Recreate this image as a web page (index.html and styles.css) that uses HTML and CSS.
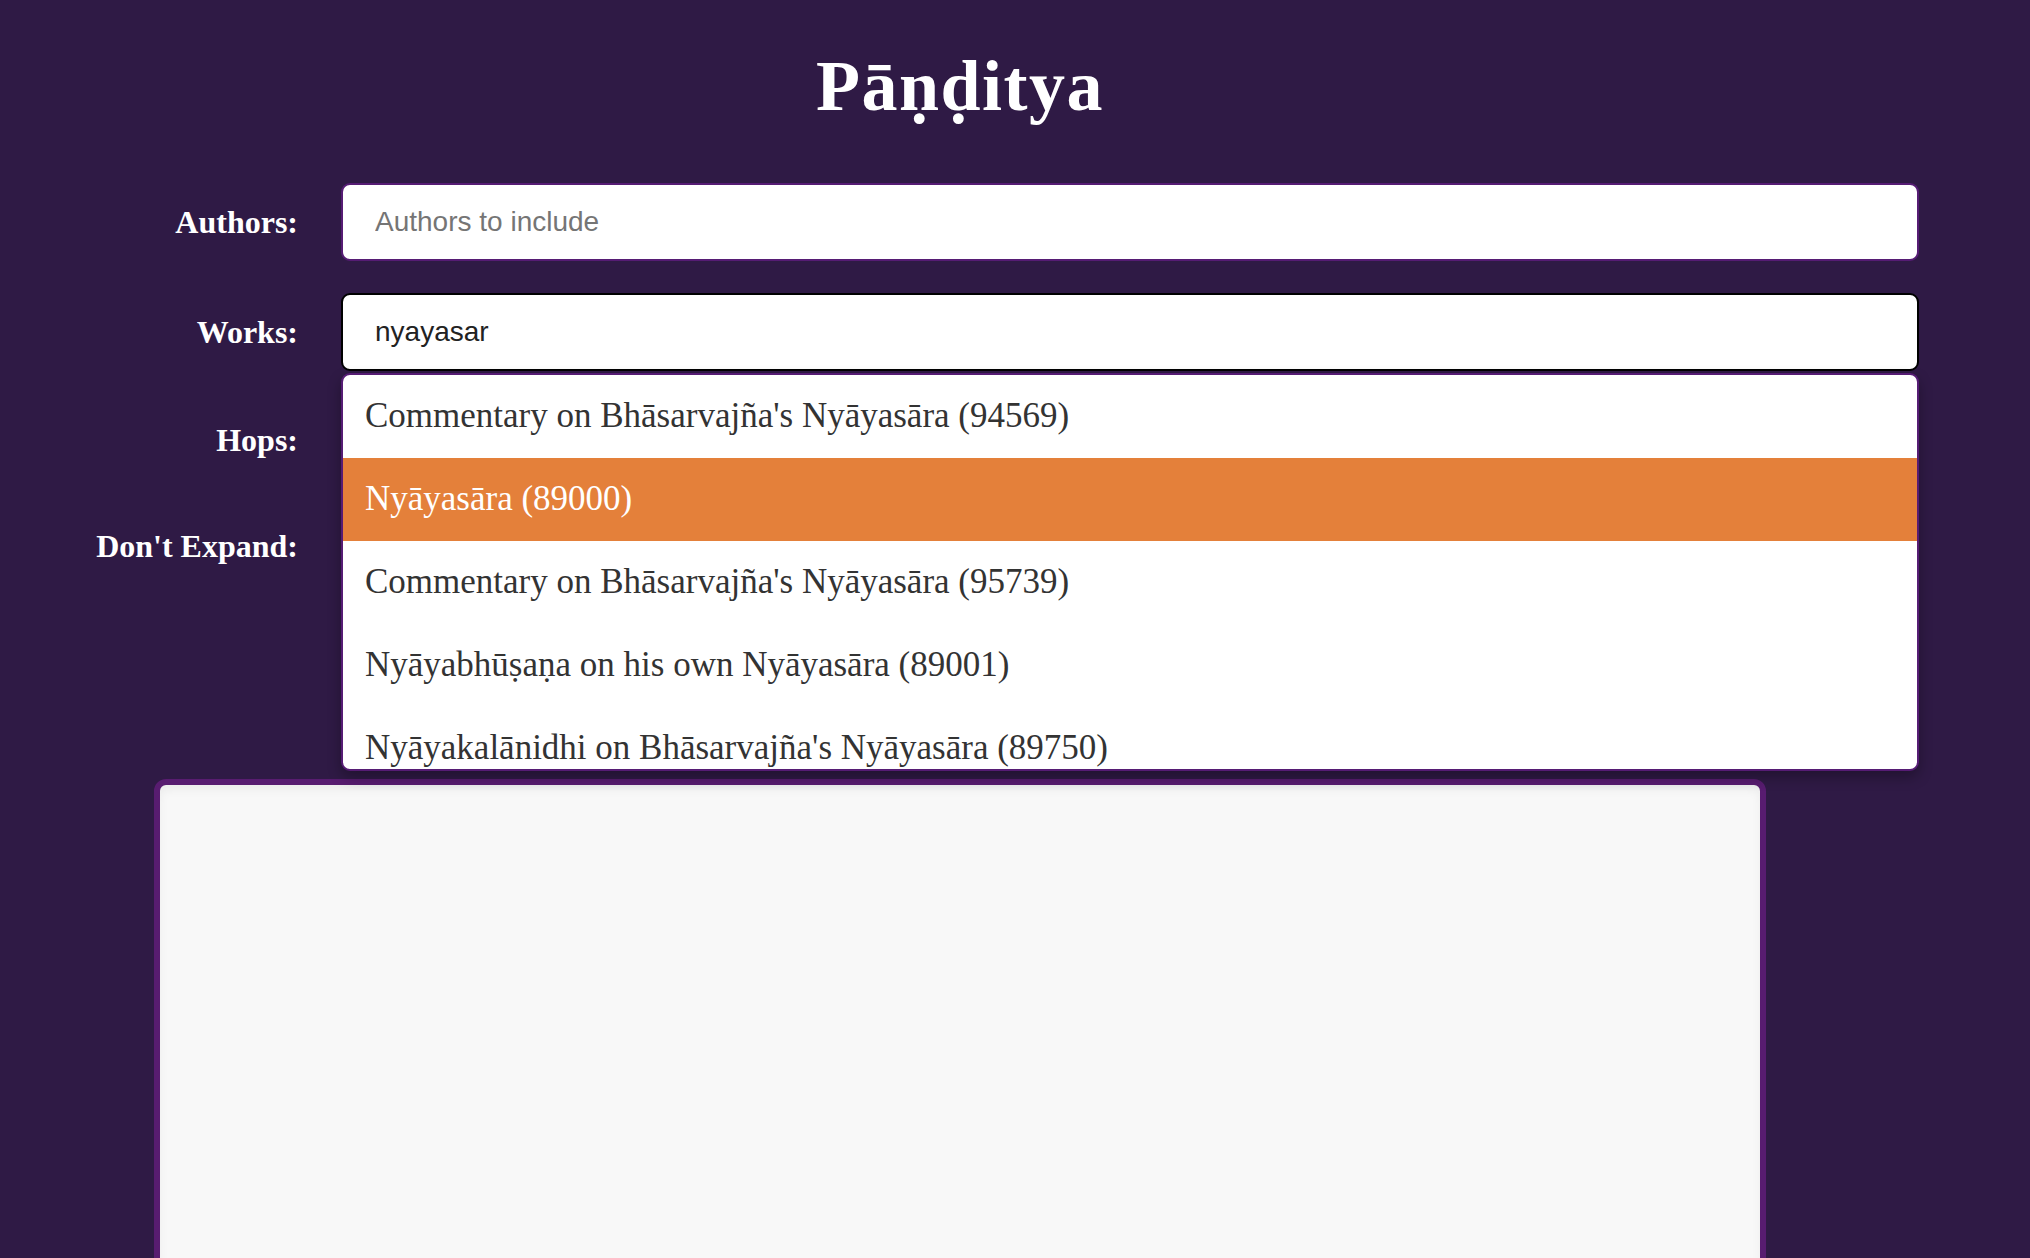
FILE: index.html
```html
<!DOCTYPE html>
<html lang="en">
<head>
<meta charset="utf-8">
<title>Pāṇḍitya</title>
<link rel="stylesheet" href="styles.css">
</head>
<body>
<div class="page">
  <h1 class="title">Pāṇḍitya</h1>
  <form class="form">
    <label class="label" for="authors">Authors:</label>
    <div class="field">
      <input id="authors" class="input" type="text" placeholder="Authors to include">
    </div>

    <label class="label" for="works">Works:</label>
    <div class="field">
      <input id="works" class="input input-focused" type="text" value="nyayasar">
      <ul class="suggestions">
        <li class="suggestion">Commentary on Bhāsarvajña's Nyāyasāra (94569)</li>
        <li class="suggestion suggestion-active">Nyāyasāra (89000)</li>
        <li class="suggestion">Commentary on Bhāsarvajña's Nyāyasāra (95739)</li>
        <li class="suggestion">Nyāyabhūṣaṇa on his own Nyāyasāra (89001)</li>
        <li class="suggestion">Nyāyakalānidhi on Bhāsarvajña's Nyāyasāra (89750)</li>
      </ul>
    </div>

    <label class="label" for="hops">Hops:</label>
    <div class="field">
      <input id="hops" class="input" type="text" value="2">
    </div>

    <label class="label" for="noexpand">Don't Expand:</label>
    <div class="field">
      <input id="noexpand" class="input" type="text">
    </div>
  </form>
  <div class="graph"></div>
</div>
</body>
</html>
```

FILE: styles.css
```css
html, body {
  margin: 0;
  padding: 0;
  height: 100%;
  overflow: hidden;
}

body {
  background: #2f1a45;
  font-family: "Liberation Serif", "Times New Roman", serif;
  color: #ffffff;
}

.page {
  width: 1920px;
}

.title {
  margin: 50px 0 0;
  font-size: 72px;
  line-height: 72px;
  font-weight: 700;
  letter-spacing: 1.5px;
  text-align: center;
  color: #ffffff;
}

.form {
  display: grid;
  grid-template-columns: 298px 1578px;
  grid-template-rows: 78px 78px 74px 74px;
  column-gap: 43px;
  row-gap: 32px;
  margin-top: 61px;
}

.label {
  align-self: center;
  text-align: right;
  font-size: 32px;
  line-height: 32px;
  font-weight: 700;
  color: #ffffff;
}

.field {
  position: relative;
  display: flex;
}

.input {
  box-sizing: border-box;
  width: 100%;
  height: 100%;
  margin: 0;
  padding: 0 32px;
  border: 2px solid #561c74;
  border-radius: 9px;
  background: #ffffff;
  font-family: "Liberation Sans", Arial, sans-serif;
  font-size: 28px;
  color: #222222;
  outline: none;
}

.input::placeholder {
  color: #757575;
}

.input-focused {
  border-color: #000000;
}

.suggestions {
  position: absolute;
  z-index: 5;
  top: calc(100% + 2px);
  left: 0;
  right: 0;
  box-sizing: border-box;
  height: 398px;
  margin: 0;
  padding: 0;
  list-style: none;
  overflow: hidden;
  background: #ffffff;
  border: 2px solid #561c74;
  border-radius: 9px;
  box-shadow: 0 6px 14px rgba(0, 0, 0, 0.3);
}

.suggestion {
  box-sizing: border-box;
  height: 83px;
  padding: 23px 22px 0;
  font-family: "Liberation Serif", "Times New Roman", serif;
  font-size: 35px;
  line-height: 36px;
  color: #333333;
  white-space: nowrap;
}

.suggestion-active {
  background: #e4803a;
  color: #ffffff;
}

.graph {
  box-sizing: border-box;
  width: 1612px;
  height: 900px;
  margin: 196px auto 0;
  border: 6px solid #581c70;
  border-radius: 12px;
  background: #f8f8f8;
  box-shadow: inset 0 5px 10px rgba(0, 0, 0, 0.05);
}
```
